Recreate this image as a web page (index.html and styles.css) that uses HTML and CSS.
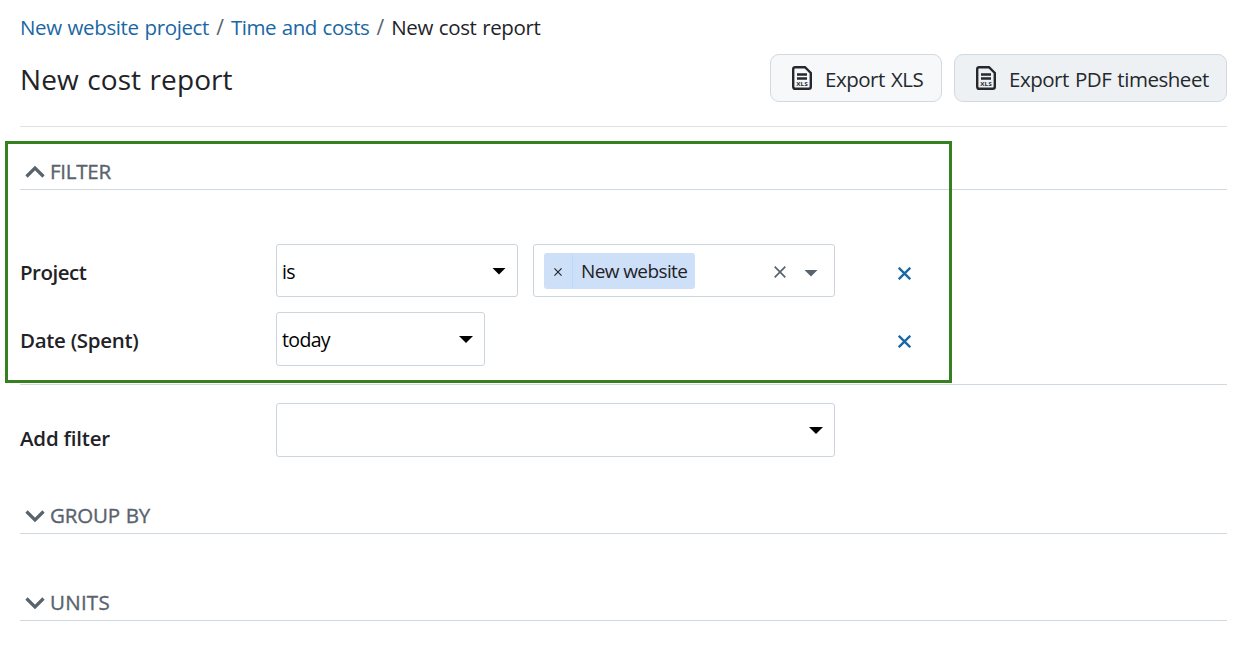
FILE: index.html
```html
<!DOCTYPE html>
<html lang="en">
<head>
<meta charset="utf-8">
<title>New cost report</title>
<link rel="stylesheet" href="styles.css">
</head>
<body>
<nav class="breadcrumb">
  <a href="#" class="crumb-project">New website project</a><span class="sep">/</span><a href="#" class="crumb-costs">Time and costs</a><span class="sep">/</span><span class="crumb-current">New cost report</span>
</nav>
<header class="header">
  <h1 class="title">New cost report</h1>
  <div class="actions">
    <button class="button button-xls"><svg class="file-icon" viewBox="0 0 20 24"><path d="M3.2 1.2H13L18.8 7V20.8Q18.8 22.8 16.8 22.8H3.2Q1.2 22.8 1.2 20.8V3.2Q1.2 1.2 3.2 1.2Z"/><path d="M5 8.5H15M5 12.5H15"/><text x="4.3" y="20" class="xls-label" textLength="11.4" lengthAdjust="spacingAndGlyphs">XLS</text></svg><span class="xls-text">Export XLS</span></button>
    <button class="button button-pdf"><svg class="file-icon" viewBox="0 0 20 24"><path d="M3.2 1.2H13L18.8 7V20.8Q18.8 22.8 16.8 22.8H3.2Q1.2 22.8 1.2 20.8V3.2Q1.2 1.2 3.2 1.2Z"/><path d="M5 8.5H15M5 12.5H15"/><text x="4.3" y="20" class="xls-label" textLength="11.4" lengthAdjust="spacingAndGlyphs">XLS</text></svg><span class="pdf-text">Export PDF timesheet</span></button>
  </div>
</header>
<main class="report">
  <div class="highlight"></div>
  <h2 class="legend legend-filter"><svg class="chevron up" viewBox="0 0 20 14"><path d="M1.5 2.5L10 11L18.5 2.5"/></svg><span class="legend-a">FILTER</span></h2>
  <div class="filters">
    <div class="row">
      <span class="label label-project">Project</span>
      <div class="select select-is"><span class="value">is</span><i class="caret"></i></div>
      <div class="select multi">
        <span class="chip"><span class="chip-x"><svg class="cross x-tiny" viewBox="0 0 14 14"><path d="M.8.8L13.2 13.2M13.2.8L.8 13.2"/></svg></span><span class="chip-text">New website</span></span>
        <svg class="cross clear" viewBox="0 0 14 14"><path d="M.8.8L13.2 13.2M13.2.8L.8 13.2"/></svg><i class="caret caret-gray"></i>
      </div>
      <svg class="cross remove" viewBox="0 0 14 14"><path d="M.8.8L13.2 13.2M13.2.8L.8 13.2"/></svg>
    </div>
    <div class="row row-date">
      <span class="label label-date">Date (Spent)</span>
      <div class="select select-today"><span class="value">today</span><i class="caret"></i></div>
      <svg class="cross remove" viewBox="0 0 14 14"><path d="M.8.8L13.2 13.2M13.2.8L.8 13.2"/></svg>
    </div>
  </div>
  <div class="row row-add">
    <span class="label label-add">Add filter</span>
    <div class="select select-add"><i class="caret"></i></div>
  </div>
  <h2 class="legend legend-group"><svg class="chevron" viewBox="0 0 20 14"><path d="M1.5 2.5L10 11L18.5 2.5"/></svg><span class="legend-b">GROUP BY</span></h2>
  <h2 class="legend legend-units"><svg class="chevron" viewBox="0 0 20 14"><path d="M1.5 2.5L10 11L18.5 2.5"/></svg><span class="legend-c">UNITS</span></h2>
</main>
</body>
</html>
```

FILE: styles.css
```css
* { box-sizing: border-box; }
body {
  margin: 0;
  padding: 0 19px 0 20px;
  background: #fff;
  color: #1f2328;
  font: 21px/30px "Open Sans", "Noto Sans", sans-serif;
  overflow: hidden;
}
.breadcrumb { display: flex; height: 54px; padding-top: 12px; white-space: nowrap; }
.breadcrumb a { color: #1a67a3; text-decoration: none; }
.sep { width: 22px; text-align: center; color: #59636e; }
.crumb-project, .crumb-costs, .crumb-current { font-size: 20.5px; word-spacing: .8px; }
.crumb-project { letter-spacing: -.36px; }
.crumb-costs, .crumb-current { letter-spacing: -.46px; }
.crumb-current { letter-spacing: -.38px; }
.header {
  display: flex;
  justify-content: space-between;
  height: 73px;
  border-bottom: 1px solid #dce3e9;
}
.title { margin: 0; font-size: 28px; line-height: 50px; font-weight: 400; letter-spacing: .1px; word-spacing: 1px; }
.actions { display: flex; gap: 12px; }
.button {
  display: flex;
  align-items: center;
  height: 48px;
  padding: 0 0 0 21px;
  border: 1px solid #d1d9e0;
  border-radius: 9px;
  background: #f6f8fa;
  color: #25292e;
  font: inherit;
  white-space: nowrap;
}
.button-xls { width: 172px; }
.button-pdf { width: 273px; background: #eef1f4; }
.file-icon { width: 20px; height: 24px; margin-right: 13px; flex: none; fill: none; stroke: #25292e; stroke-width: 2.4; }
.xls-label { font: 700 6px "Open Sans", sans-serif; fill: #25292e; stroke: none; }
.xls-text, .pdf-text { padding-top: 2px; font-size: 20.5px; letter-spacing: -.47px; word-spacing: 1.2px; }
.report { position: relative; }
.highlight {
  position: absolute;
  left: -15px;
  top: 14px;
  width: 947px;
  height: 242px;
  border: 3px solid #358021;
}
.legend {
  display: flex;
  align-items: center;
  margin: 0;
  padding: 0 0 0 5px;
  height: 38px;
  border-bottom: 1px solid #d1d9e0;
  color: #59636e;
  font-size: 20.5px;
  font-weight: 400;
  -webkit-text-stroke: .35px #59636e;
}
.legend-filter { height: 63px; padding-top: 26px; }
.legend-group { margin-top: 39px; }
.legend-units { margin-top: 49px; }
.legend-a { letter-spacing: -.25px; }
.legend-b { letter-spacing: -.2px; word-spacing: .8px; }
.legend-c { letter-spacing: .25px; }
.chevron { width: 20px; height: 14px; margin: 2px 5px 0 0; fill: none; stroke: #59636e; stroke-width: 3.2; }
.up { transform: rotate(180deg); }
.filters { padding-top: 54px; height: 195px; border-bottom: 1px solid #d1d9e0; }
.row { display: flex; align-items: center; height: 53px; }
.row-date { margin-top: 15px; height: 54px; }
.row-add { height: 54px; margin-top: 18px; }
.label { width: 256px; flex: none; padding-top: 2px; font-size: 20.5px; font-weight: 600; white-space: nowrap; }
.label-project { letter-spacing: -.5px; }
.label-date { letter-spacing: -.3px; }
.label-add { letter-spacing: -.2px; }
.row-add .label { padding-top: 16px; }
.select {
  display: flex;
  align-items: center;
  justify-content: space-between;
  height: 100%;
  padding: 0 11px 0 5px;
  border: 1px solid #ccd5dd;
  border-radius: 3px;
  background: #fff;
  color: #000;
}
.value { padding-top: 2px; font-size: 19.5px; letter-spacing: -.65px; }
.caret {
  width: 14px;
  height: 7px;
  margin: 1px 0 0 auto;
  background: #000;
  clip-path: polygon(0 0, 100% 0, 50% 100%);
}
.caret-gray { background: #59636e; margin: 5px 5px 0 18px; }
.select-is { width: 242px; }
.multi { width: 302px; margin-left: 15px; padding: 0 11px 0 10px; }
.select-today { width: 209px; }
.select-add { width: 559px; }
.chip {
  display: flex;
  align-items: center;
  width: 151px;
  height: 36px;
  border-radius: 3px;
  background: #cee0f8;
  color: #1f2328;
  white-space: nowrap;
}
.chip-x {
  display: flex;
  align-items: center;
  justify-content: center;
  width: 29px;
  height: 36px;
  padding-top: 3px;
  border-right: 1px solid #b8dbff;
}
.cross { fill: none; stroke: currentColor; stroke-width: 2; }
.x-tiny { width: 8px; height: 8px; }
.chip-text { padding-left: 8px; padding-top: 1px; font-size: 19px; letter-spacing: -.6px; }
.clear { width: 12px; height: 12px; margin: 3px 0 0 auto; color: #59636e; }
.remove { width: 13px; height: 13px; margin: 6px 316px 0 auto; color: #1a67a3; stroke-width: 2.5; }
.row-date .remove { margin-top: 5px; }
```
